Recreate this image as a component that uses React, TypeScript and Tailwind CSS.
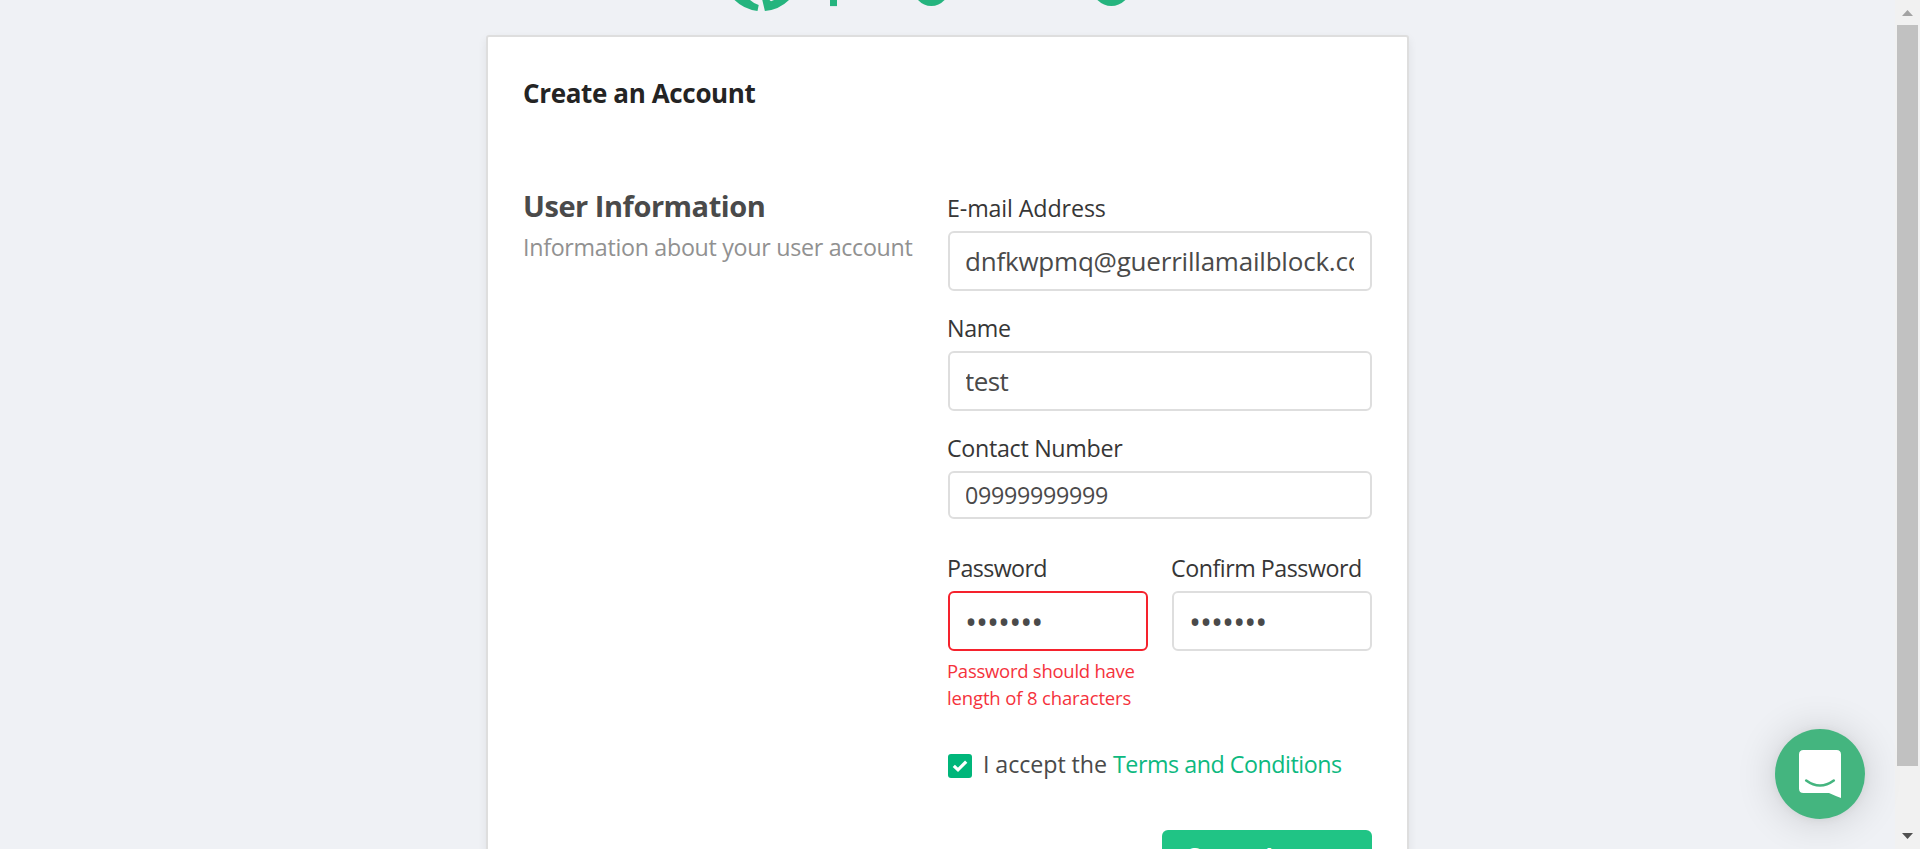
import type { ReactNode } from "react";

function Logo() {
  return (
    <svg className="absolute left-0 top-0" width="460" height="16" viewBox="700 0 460 16" fill="#25b47e">
      <path d="M734.5 0A38.6 38.6 0 0 0 757.5 10.9L758.7 5.1Q754 3.6 750 0Z" />
      <path d="M762.3 0L764.9 11A38.6 38.6 0 0 0 789 0H774L771 1.2L769.5 0Z" />
      <rect x="830" y="0" width="7" height="6.1" />
      <path d="M918 0Q923.8 6.1 931.3 6.1T944.6 0Z" />
      <path d="M1097.4 0Q1103.8 6.1 1111.3 6.1T1125.4 0Z" />
    </svg>
  );
}

const base =
  "block w-full rounded-md border-2 bg-white px-4 -indent-px text-[#4a4a4a] outline-none";

function Field({ label, spacing, children }: { label: string; spacing: string; children: ReactNode }) {
  return (
    <div className="h-[120px]">
      <label className={`mb-1.5 block whitespace-nowrap -indent-px text-[23.25px] leading-[34px] text-[#363636] ${spacing}`}>{label}</label>
      {children}
    </div>
  );
}

export default function App() {
  return (
    <div className="flex h-[849px] w-full overflow-hidden bg-[#eff1f5] font-['Open_Sans','Noto_Sans',sans-serif]">
      <div className="relative h-full w-[1895px] shrink-0">
        <header className="relative ml-[700px] h-[35px] w-[460px]">
          <Logo />
        </header>
        <main className="ml-[486px] h-[900px] w-[923px] rounded-[3px] border-2 border-[#dedede] bg-white pl-9 pr-[35px] pt-[37px] shadow-[0_4px_10px_rgba(10,10,10,0.07)]">
          <h1 className="h-[117px] -indent-px text-[26px] font-bold leading-[38px] tracking-[-0.36px] text-[#242424]">Create an Account</h1>
          <div className="flex">
            <section className="w-[424px] shrink-0 pr-9">
              <h2 className="-mt-[5px] whitespace-nowrap -indent-px text-[29px] font-bold leading-[40px] tracking-[-0.46px] text-[#4a4a4a]">User Information</h2>
              <p className="mt-px whitespace-nowrap -indent-px text-[23.25px] leading-[40px] tracking-[-0.3px] text-[#919191]">Information about your user account</p>
            </section>
            <form className="w-[424px]">
              <Field label="E-mail Address" spacing="tracking-[-0.12px]">
                <input className={`${base} h-[60px] border-[#dedede] text-[26px] tracking-[-0.21px]`} defaultValue="dnfkwpmq@guerrillamailblock.com" />
              </Field>
              <Field label="Name" spacing="tracking-[-0.3px]">
                <input className={`${base} h-[60px] border-[#dedede] text-[26px] tracking-[-0.6px]`} defaultValue="test" />
              </Field>
              <Field label="Contact Number" spacing="tracking-[-0.3px]">
                <input className={`${base} h-12 border-[#dedede] text-[23.25px] tracking-[-0.3px]`} defaultValue="09999999999" />
              </Field>
              <div className="flex gap-6">
                <div className="w-[200px]">
                  <Field label="Password" spacing="tracking-[-0.6px]">
                    <input type="password" className={`${base} h-[60px] border-[#f5222d] text-[32px] tracking-[-1px]`} defaultValue="testing" />
                    <p className="mt-1.5 whitespace-nowrap -indent-px text-[18.5px] leading-[27px] text-[#f5323c]">
                      <span className="block tracking-[-0.26px]">Password should have</span>
                      <span className="block leading-7 tracking-[-0.14px]">length of 8 characters</span>
                    </p>
                  </Field>
                </div>
                <div className="w-[200px]">
                  <Field label="Confirm Password" spacing="tracking-[-0.48px]">
                    <input type="password" className={`${base} h-[60px] border-[#dedede] text-[32px] tracking-[-1px]`} defaultValue="testing" />
                  </Field>
                </div>
              </div>
              <div className="mt-[75px] flex h-9 items-center text-[23.25px] leading-9 text-[#4a4a4a]">
                <span className="mt-[3px] flex size-6 items-center justify-center rounded-[3px] bg-[#00b67a]">
                  <svg width="16" height="14" viewBox="0 0 16 14" fill="none" stroke="#fff" strokeWidth="3.2">
                    <path d="M1.8 6.8L6 10.8L14.2 2.6" />
                  </svg>
                </span>
                <span className="ml-[11px] whitespace-pre tracking-[-0.08px]">I accept the </span>
                <a className="whitespace-nowrap tracking-[-0.46px] text-[#0db97f]">Terms and Conditions</a>
              </div>
              <button type="button" className="ml-auto mt-12 block h-[60px] w-[210px] whitespace-nowrap rounded-md bg-[#20c485] pb-[9px] text-2xl font-semibold leading-[50px] tracking-[-0.9px] text-white">
                Create Account
              </button>
            </form>
          </div>
        </main>
        <div className="absolute left-[1775px] top-[729px] size-[90px] rounded-full bg-[#44b57f] shadow-[0_2px_40px_rgba(0,0,0,0.16),0_1px_9px_rgba(0,0,0,0.06)]">
          <svg width="90" height="90" viewBox="0 0 90 90">
            <path d="M28.5 21H61.5Q66 21 66 25.5V69Q60 66.8 54 64H28.5Q24 64 24 59.5V25.5Q24 21 28.5 21Z" fill="#fff" />
            <path d="M31.2 51.5Q45 61.5 58.8 51.5" fill="none" stroke="#44b57f" strokeWidth="2.6" strokeLinecap="round" />
          </svg>
        </div>
      </div>
      <div className="flex h-full w-[25px] flex-col items-center bg-[#f1f1f1]">
        <svg className="h-[25px] shrink-0" width="25" height="25" fill="#a3a3a3"><path d="M7 16L12.5 10L18 16Z" /></svg>
        <div className="h-[741px] w-[21px] bg-[#c1c1c1]" />
        <svg className="mt-auto" width="25" height="25" fill="#505050"><path d="M7 9L12.5 15L18 9Z" /></svg>
      </div>
    </div>
  );
}
